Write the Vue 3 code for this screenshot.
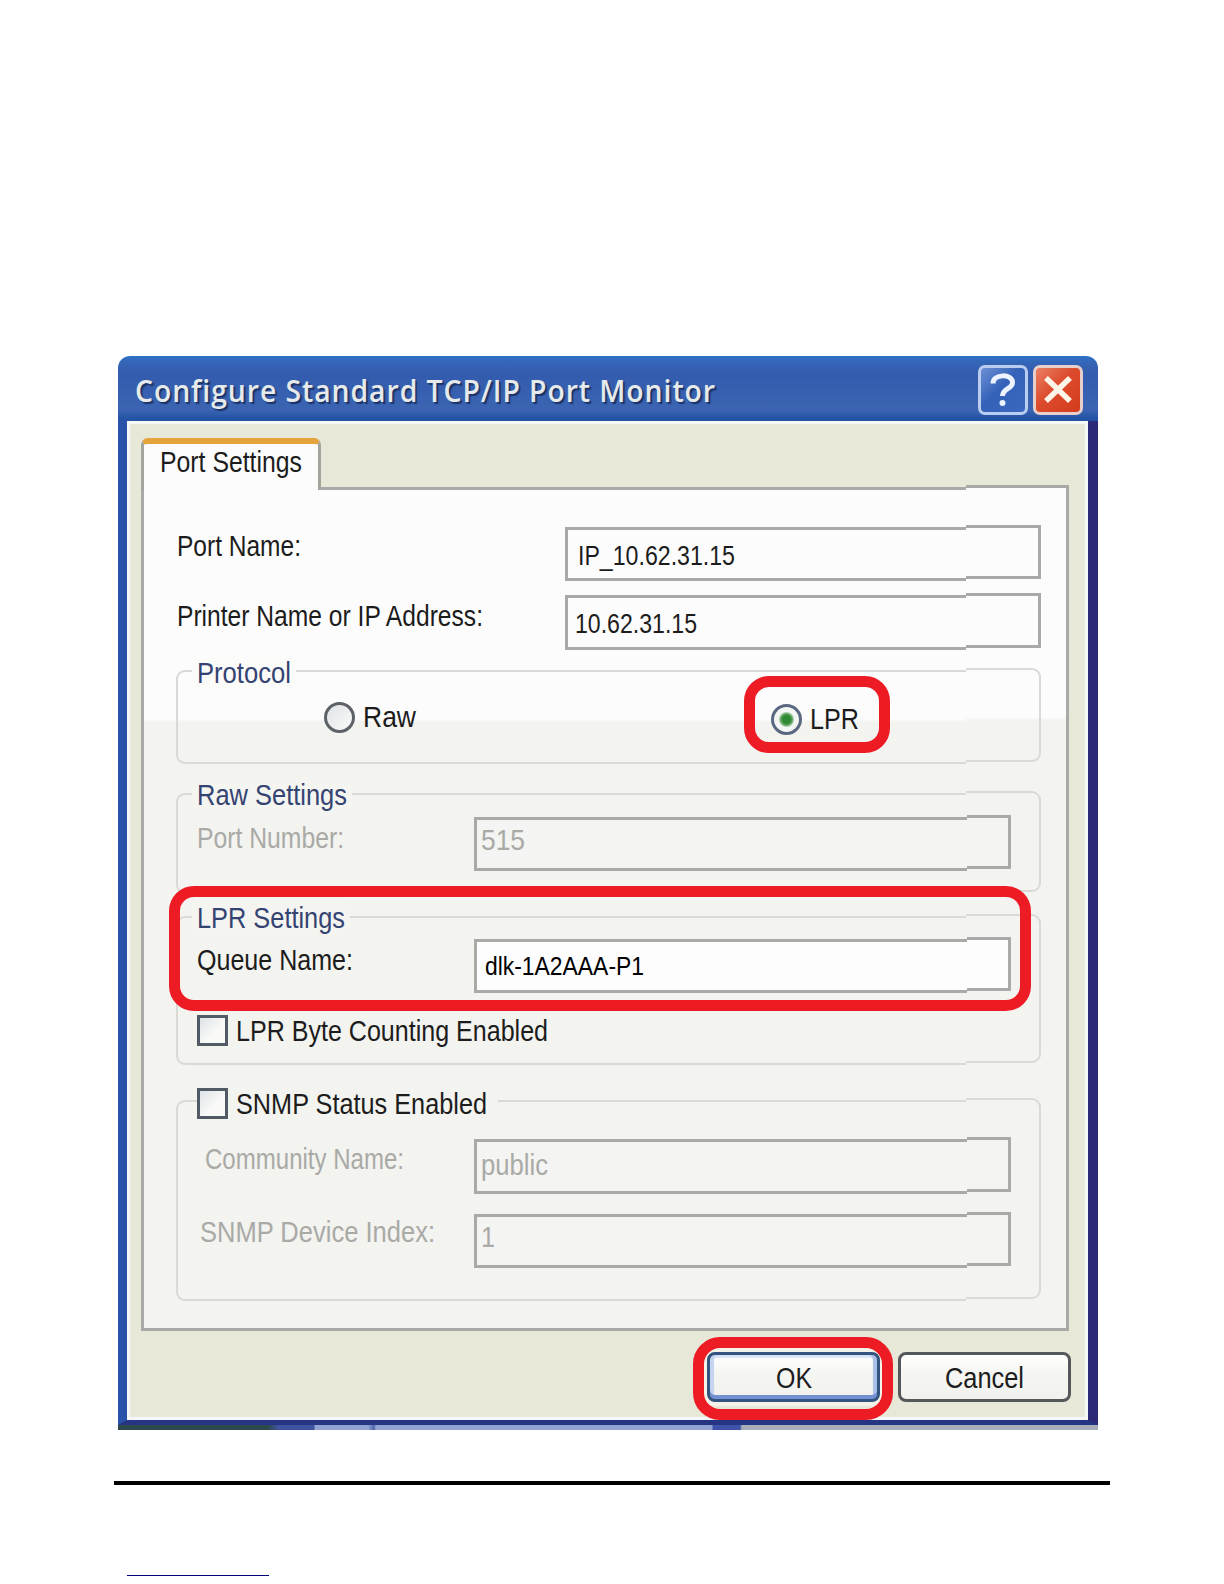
<template>
    <div class="page">
        <div class="window">
            <div class="titlebar">
                <span v-fit="581" class="title">Configure Standard TCP/IP Port Monitor</span>
                <div class="title-buttons">
                    <div class="title-button help">
                        <svg width="44" height="44" viewBox="0 0 44 44">
                            <path
                                d="M12 15.5 C12 5.5 31.5 5.5 31.5 14.5 C31.5 21 21.5 20.5 21.5 28"
                                fill="none"
                                stroke="#eef4ff"
                                stroke-width="5" />
                            <circle cx="21.5" cy="35" r="3" fill="#eef4ff" />
                        </svg>
                    </div>
                    <div class="title-button close">
                        <svg width="44" height="44" viewBox="0 0 44 44">
                            <path d="M10 10 L34 33 M34 10 L10 33" fill="none" stroke="#fff6ea" stroke-width="5.5" />
                        </svg>
                    </div>
                </div>
            </div>

            <div class="body">
                <div class="tab"><span v-fit="142">Port Settings</span></div>

                <div class="panel framed">
                    <div class="row">
                        <div class="label name-label"><span v-fit="124">Port Name:</span></div>
                        <div class="field framed wide"><span v-fit="157" class="name-value">IP_10.62.31.15</span></div>
                    </div>
                    <div class="row address-row">
                        <div class="label address-label"><span v-fit="306">Printer Name or IP Address:</span></div>
                        <div class="field framed wide address">
                            <span v-fit="122" class="address-value">10.62.31.15</span>
                        </div>
                    </div>

                    <div class="group framed protocol">
                        <div class="legend"><span v-fit="94">Protocol</span></div>
                        <div class="radios">
                            <div class="radio raw">
                                <span class="circle"></span>
                                <span v-fit="53">Raw</span>
                            </div>
                            <div class="radio lpr">
                                <span class="circle checked"></span>
                                <span v-fit="49">LPR</span>
                                <div class="highlight"></div>
                            </div>
                        </div>
                    </div>

                    <div class="group framed raw-settings">
                        <div class="legend"><span v-fit="150">Raw Settings</span></div>
                        <div class="row disabled">
                            <div class="label"><span v-fit="147">Port Number:</span></div>
                            <div class="field framed"><span v-fit="44">515</span></div>
                        </div>
                    </div>

                    <div class="group framed lpr-settings">
                        <div class="legend"><span v-fit="148">LPR Settings</span></div>
                        <div class="row">
                            <div class="label"><span v-fit="156">Queue Name:</span></div>
                            <div class="field framed queue"><span v-fit="159">dlk-1A2AAA-P1</span></div>
                        </div>
                        <div class="check">
                            <span class="box"></span>
                            <span v-fit="312">LPR Byte Counting Enabled</span>
                        </div>
                        <div class="highlight"></div>
                    </div>

                    <div class="group framed snmp">
                        <div class="check">
                            <span class="box"></span>
                            <span v-fit="251">SNMP Status Enabled</span>
                        </div>
                        <div class="row disabled community">
                            <div class="label"><span v-fit="199">Community Name:</span></div>
                            <div class="field framed"><span v-fit="67">public</span></div>
                        </div>
                        <div class="row disabled index">
                            <div class="label"><span v-fit="235">SNMP Device Index:</span></div>
                            <div class="field framed"><span v-fit="14">1</span></div>
                        </div>
                    </div>
                </div>

                <div class="buttons">
                    <div class="button ok">
                        <span v-fit="36">OK</span>
                        <div class="highlight"></div>
                    </div>
                    <div class="button"><span v-fit="79">Cancel</span></div>
                </div>
            </div>
            <div class="desktop"></div>
        </div>

        <div class="rule"></div>
        <div class="link-line"></div>
    </div>
</template>

<script setup>
    // Squeezes a text horizontally to the given width in pixels
    const vFit = {
        mounted(el, binding) {
            const width = el.getBoundingClientRect().width;
            el.style.transform = `scaleX(${binding.value / width})`;
            el.style.marginRight = `${binding.value - width}px`;
        },
    };
</script>

<style>
    body {
        margin: 0;
        background: #fff;
    }
</style>

<style scoped>
    .page {
        box-sizing: border-box;
        width: 1224px;
        height: 1584px;
        padding: 356px 0 0 114px;
        overflow: hidden;
        font-family: 'Liberation Sans', Arial, sans-serif;
        font-size: 29.5px;
        line-height: 30px;
        color: #1c1c1c;
    }
    .page div {
        box-sizing: border-box;
    }
    span {
        display: block;
        flex: none;
        width: max-content;
        white-space: nowrap;
        transform-origin: left center;
    }

    .window {
        width: 980px;
        height: 1074px;
        margin-left: 4px;
    }
    .titlebar {
        display: flex;
        justify-content: space-between;
        height: 65px;
        padding: 9px 15px 0 17px;
        border-radius: 12px 12px 0 0;
        background: linear-gradient(#2b72c4, #3564b6 7px, #345cae 20px, #3b64b2 54px, #2454a6 62px, #2451a3);
    }
    .title {
        padding-top: 10px;
        font-family: 'Open Sans', sans-serif;
        font-size: 30px;
        font-weight: 600;
        letter-spacing: 1px;
        line-height: 32px;
        color: #e6eaea;
        text-shadow: 2px 2px 1px #1b3468;
    }
    .title-buttons {
        display: flex;
        gap: 5px;
    }
    .title-button {
        width: 50px;
        height: 50px;
        border: 3px solid #b9cdf0;
        border-radius: 7px;
    }
    .help {
        background: linear-gradient(135deg, #6c8fd4, #3462b8 45%, #3a68c0);
    }
    .close {
        border-color: #e9cfcb;
        background: linear-gradient(135deg, #ea8065, #dc4a2c 45%, #d33c1d);
    }

    .body {
        height: 1004px;
        padding: 17px 19px 0 14px;
        border-left: 9px solid #2853a8;
        border-right: 10px solid #2c2a76;
        border-bottom: 5px solid #253583;
        background: #e8e8d9;
        box-shadow: inset 3px 3px 1px #f8f8f7, inset -3px -3px 1px #f5f7f8;
    }
    .tab {
        position: relative;
        z-index: 2;
        width: 180px;
        height: 52px;
        margin-bottom: -3px;
        padding: 3px 0 0 16px;
        border: 3px solid #a3a49e;
        border-top: 6px solid #e4a33b;
        border-bottom: 0;
        border-radius: 7px 7px 0 0;
        background: #fcfcfc;
    }

    /* Frame in two pieces: the part right of the seam sits a little higher */
    .framed {
        position: relative;
        isolation: isolate;
        --seam: 75px;
        --line: 3px solid #a9aaa7;
        --fill: transparent;
        --round: 0px;
    }
    .framed::before,
    .framed::after {
        content: '';
        position: absolute;
        z-index: -1;
        box-sizing: border-box;
        border: var(--line);
        background: var(--fill);
    }
    .framed::before {
        inset: 0 var(--seam) 0 0;
        border-right: 0;
        border-radius: var(--round) 0 0 var(--round);
    }
    .framed::after {
        top: -2px;
        right: 0;
        bottom: 2px;
        width: var(--seam);
        border-left: 0;
        border-radius: 0 var(--round) var(--round) 0;
    }

    .panel {
        --seam: 103px;
        --fill: linear-gradient(#fcfcfc 229px, #f3f3f0 232px);
        width: 928px;
        height: 844px;
        padding: 40px 28px 0 35px;
    }
    .panel::after {
        bottom: 0;
    }
    .row {
        display: flex;
        align-items: flex-start;
    }
    .name-label {
        padding: 4px 0 0 1px;
    }
    .address-label {
        padding: 6px 0 0 1px;
    }
    .address-row {
        margin-top: 14px;
    }
    .field {
        --fill: #f4f4f2;
        --seam: 44px;
        width: 537px;
        height: 54px;
        padding: 8px 0 0 7px;
    }
    .wide {
        --fill: #fcfcfc;
        --seam: 75px;
        width: 476px;
        margin-left: auto;
        padding: 13px 0 0 13px;
    }
    .address {
        height: 55px;
        padding-left: 10px;
    }
    .name-value,
    .address-value {
        font-size: 28.5px;
    }
    .queue {
        --fill: #fdfdfd;
        padding: 14px 0 0 11px;
        font-size: 25.5px;
        line-height: 26px;
        color: #000;
    }
    .disabled {
        color: #a9aaa6;
    }

    .group {
        --line: 2px solid #d9dad6;
        --round: 9px;
        display: flow-root;
        width: 865px;
        padding-left: 21px;
    }
    .group .label {
        width: 277px;
        padding-top: 5px;
    }
    .legend {
        display: flex;
        width: max-content;
        margin-left: -5px;
        padding: 0 5px;
        background: #f4f4f1;
        color: #344372;
    }
    .protocol {
        height: 94px;
        margin-top: 20px;
    }
    .protocol .legend {
        margin-top: -12px;
        background: #fbfbfa;
    }
    .radios {
        display: flex;
        margin-top: 14px;
        padding-left: 127px;
    }
    .radio {
        position: relative;
        display: flex;
        gap: 8px;
        height: 32px;
    }
    .radio.raw {
        width: 447px;
    }
    .radio.lpr {
        padding-top: 2px;
    }
    .circle {
        box-sizing: border-box;
        width: 31px;
        height: 31px;
        border: 3px solid #5c6268;
        border-radius: 50%;
        background: linear-gradient(135deg, #dfe3e4, #fafafa);
    }
    .checked {
        border-color: #596780;
        background: radial-gradient(circle, #2f8a35 4px, #6dab6c 6px, #f3f6f3 8px);
    }
    .highlight {
        position: absolute;
        z-index: 3;
        border: 11px solid #ed1c24;
        border-radius: 25px;
    }
    .radio .highlight {
        top: -26px;
        left: -27px;
        width: 146px;
        height: 77px;
    }

    .raw-settings {
        height: 101px;
        margin-top: 29px;
    }
    .raw-settings .legend {
        margin-top: -13px;
        margin-bottom: 7px;
    }
    .raw-settings .label {
        padding-top: 6px;
    }
    .lpr-settings {
        height: 149px;
        margin-top: 22px;
    }
    .lpr-settings .legend {
        margin-top: -13px;
        margin-bottom: 6px;
    }
    .lpr-settings .label {
        padding-top: 6px;
    }
    .lpr-settings .check {
        margin-top: 22px;
    }
    .lpr-settings .check span:last-child {
        padding-top: 1px;
    }
    .lpr-settings .highlight {
        top: -30px;
        left: -7px;
        width: 862px;
        height: 125px;
    }
    .check {
        display: flex;
        gap: 8px;
        width: max-content;
        padding-right: 11px;
    }
    .box {
        box-sizing: border-box;
        width: 31px;
        height: 31px;
        border: 3px solid #505b65;
        background: linear-gradient(135deg, #dfe3e6, #f9f9f8 60%);
    }

    .snmp {
        height: 201px;
        margin-top: 35px;
    }
    .snmp .check {
        height: 32px;
        margin-top: -12px;
        background: #f3f3f0;
    }
    .snmp .check span:last-child {
        padding-top: 1px;
    }
    .community {
        margin-top: 19px;
    }
    .community .field {
        height: 55px;
        padding-top: 11px;
    }
    .group.snmp .community .label {
        padding-left: 8px;
    }
    .index {
        margin-top: 20px;
    }
    .group.snmp .index .label {
        padding: 3px 0 0 3px;
    }

    .buttons {
        display: flex;
        justify-content: flex-end;
        gap: 18px;
        margin-top: 21px;
        margin-right: -2px;
    }
    .button {
        position: relative;
        display: flex;
        justify-content: center;
        width: 173px;
        height: 50px;
        padding-top: 8px;
        border: 3px solid #55585a;
        border-radius: 8px;
        background: linear-gradient(#fff, #f5f5f2 40%, #f1f1ee);
    }
    .ok {
        border-color: #33547f;
        box-shadow: inset 0 -4px 0 #7391d2, inset 4px 0 1px #c3d4f0, inset -4px 0 1px #a9bfe8, inset 0 3px 1px #dce6f5,
            0 0 0 4px #f4f3ea;
    }
    .ok .highlight {
        top: -18px;
        left: -17px;
        width: 200px;
        height: 83px;
        border-radius: 27px;
    }
    .desktop {
        height: 5px;
        background: linear-gradient(
            90deg,
            #2f4a4c 150px,
            #3f52a0 160px 196px,
            #93a4d2 197px 250px,
            #4f65b0 256px,
            #93a4d2 258px 594px,
            #3d52a8 595px 622px,
            #a9adb8 624px
        );
    }

    .rule {
        width: 996px;
        height: 4px;
        margin-top: 51px;
        background: #000;
    }
    .link-line {
        width: 142px;
        height: 1px;
        margin: 90px 0 0 13px;
        background: #00007b;
    }
</style>
